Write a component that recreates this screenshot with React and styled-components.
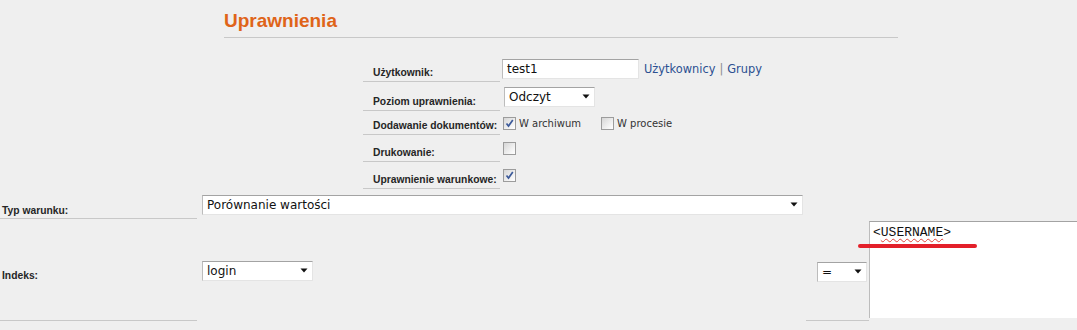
import React from 'react';
import styled, { createGlobalStyle } from 'styled-components';

const Global = createGlobalStyle`
  html, body { margin: 0; padding: 0; background: #efefef; overflow: hidden; }
  body { font-family: "DejaVu Sans", Verdana, sans-serif; }
`;

const Page = styled.div`
  width: 1077px;
  height: 330px;
  overflow: hidden;
  background: #efefef;
`;

const Header = styled.div`
  margin-left: 224px;
  width: 674px;
  height: 38px;
  box-sizing: border-box;
  border-bottom: 1px solid #c8c8c8;
  display: flex;
  align-items: flex-end;
  padding-bottom: 6px;
`;

const Title = styled.h1`
  margin: 0;
  font: bold 19px/20px "Liberation Sans", Arial, sans-serif;
  color: #df6419;
`;

const Form = styled.div`
  margin: 17px 0 0 363px;
  display: flex;
  flex-direction: column;
`;

const Row = styled.div`
  display: flex;
  height: ${p => p.$h}px;
`;

const labelFont = `bold 10.3px/12px "Liberation Sans", Arial, sans-serif`;

const Label = styled.div`
  width: 137px;
  box-sizing: border-box;
  padding: 0 0 2px 10px;
  border-bottom: 1px solid #c8c8c8;
  display: flex;
  align-items: flex-end;
  font: ${labelFont};
  color: #262626;
  white-space: nowrap;
`;

const Value = styled.div`
  display: flex;
  align-items: center;
  padding-left: 2px;
  font: 10px "DejaVu Sans", Verdana, sans-serif;
  color: #333;
`;

const TextInput = styled.div`
  width: 137px;
  height: 20px;
  box-sizing: border-box;
  background: #fff;
  border: 1px solid;
  border-color: #a3a3a3 #e4e4e4 #e4e4e4 #bcbcbc;
  padding: 0 4px;
  font: 12px/18px "DejaVu Sans", Tahoma, sans-serif;
  color: #111;
`;

const Links = styled.div`
  margin-left: 5px;
  font: 11.4px "DejaVu Sans", Verdana, sans-serif;
  color: #2c5091;
`;

const Sep = styled.span`
  color: #8a8a8a;
  margin: 0 4px;
`;

const SelectBox = styled.div`
  position: relative;
  width: ${p => p.$w}px;
  height: 20px;
  box-sizing: border-box;
  margin-left: ${p => p.$ml || 0}px;
  background: #fff;
  border: 1px solid;
  border-color: #a3a3a3 #e4e4e4 #e4e4e4 #bcbcbc;
  padding: 0 4px;
  font: 12px/18px "DejaVu Sans", Tahoma, sans-serif;
  color: #111;
  white-space: nowrap;
`;

const Arrow = styled.svg`
  position: absolute;
  right: 4px;
  top: 6px;
`;

const Select = ({ w, ml, children }) => (
  <SelectBox $w={w} $ml={ml}>
    {children}
    <Arrow width="8" height="5" viewBox="0 0 8 5">
      <path d="M0.5 0.5 H7.5 L4 4.5 Z" fill="#111" />
    </Arrow>
  </SelectBox>
);

const CheckOption = styled.label`
  display: flex;
  align-items: center;
  margin-right: ${p => p.$mr || 0}px;
`;

const Box = styled.span`
  width: 13px;
  height: 13px;
  box-sizing: border-box;
  border: 1px solid #9c9c9c;
  background: linear-gradient(135deg, #d6d6d6 0%, #f4f4f4 70%, #fff 100%);
  display: inline-flex;
  align-items: center;
  justify-content: center;
  margin: 0 3px 0 1px;
`;

const Check = ({ checked }) => (
  <Box>
    {checked && (
      <svg width="9" height="9" viewBox="0 0 9 9">
        <path d="M1.5 4.5 L3.5 7 L7.8 1" stroke="#3c5a9a" strokeWidth="1.7" fill="none" />
      </svg>
    )}
  </Box>
);

const Lower = styled.div`
  display: grid;
  grid-template-columns: 197px 609px 63px 260px;
  grid-template-rows: 30px 102px;
  width: 1129px;
`;

const LowLabel = styled.div`
  box-sizing: border-box;
  padding: ${p => (p.$middle ? '12px 0 0 2px' : '0 0 1px 2px')};
  border-bottom: 1px solid #c8c8c8;
  display: flex;
  align-items: ${p => (p.$middle ? 'center' : 'flex-end')};
  font: ${labelFont};
  color: #262626;
`;

const SelectCell = styled.div`
  display: flex;
  align-items: center;
  padding-left: 5px;
  padding-top: ${p => p.$pt || 0}px;
`;

const OpCell = styled.div`
  box-sizing: border-box;
  border-bottom: 1px solid #c8c8c8;
  display: flex;
  align-items: center;
  padding: 4px 0 0 11px;
`;

const TextCell = styled.div`
  position: relative;
  padding-top: 2px;
`;

const TextArea = styled.div`
  height: 97px;
  box-sizing: border-box;
  background: #fff;
  border-top: 1px solid #a3a3a3;
  border-left: 1px solid #bcbcbc;
  padding: 3px 3px;
  font: 13px/16px "Liberation Mono", "Courier New", monospace;
  color: #111;
`;

const Squiggle = styled.span`
  text-decoration: underline wavy #e0443a;
  text-decoration-thickness: 1px;
  text-underline-offset: 2px;
`;

const RedMark = styled.div`
  position: absolute;
  left: -11px;
  top: 25px;
  width: 119px;
  height: 4px;
  border-radius: 2px;
  background: #e3202a;
`;

export default function App() {
  return (
    <Page>
      <Global />
      <Header>
        <Title>Uprawnienia</Title>
      </Header>
      <Form>
        <Row $h={27}>
          <Label>Użytkownik:</Label>
          <Value>
            <TextInput>test1</TextInput>
            <Links>
              Użytkownicy<Sep>|</Sep>Grupy
            </Links>
          </Value>
        </Row>
        <Row $h={29}>
          <Label>Poziom uprawnienia:</Label>
          <Value>
            <Select w={91} ml={2}>Odczyt</Select>
          </Value>
        </Row>
        <Row $h={24}>
          <Label>Dodawanie dokumentów:</Label>
          <Value>
            <CheckOption $mr={19}>
              <Check checked />W archiwum
            </CheckOption>
            <CheckOption>
              <Check />W procesie
            </CheckOption>
          </Value>
        </Row>
        <Row $h={27}>
          <Label>Drukowanie:</Label>
          <Value>
            <Check />
          </Value>
        </Row>
        <Row $h={27}>
          <Label>Uprawnienie warunkowe:</Label>
          <Value>
            <Check checked />
          </Value>
        </Row>
      </Form>
      <Lower>
        <LowLabel>Typ warunku:</LowLabel>
        <SelectCell $pt={2}>
          <Select w={601}>Porównanie wartości</Select>
        </SelectCell>
        <div />
        <div />
        <LowLabel $middle>Indeks:</LowLabel>
        <SelectCell $pt={2}>
          <Select w={111}>login</Select>
        </SelectCell>
        <OpCell>
          <Select w={50}>=</Select>
        </OpCell>
        <TextCell>
          <TextArea>
            &lt;<Squiggle>USERNAME</Squiggle>&gt;
          </TextArea>
          <RedMark />
        </TextCell>
      </Lower>
    </Page>
  );
}
